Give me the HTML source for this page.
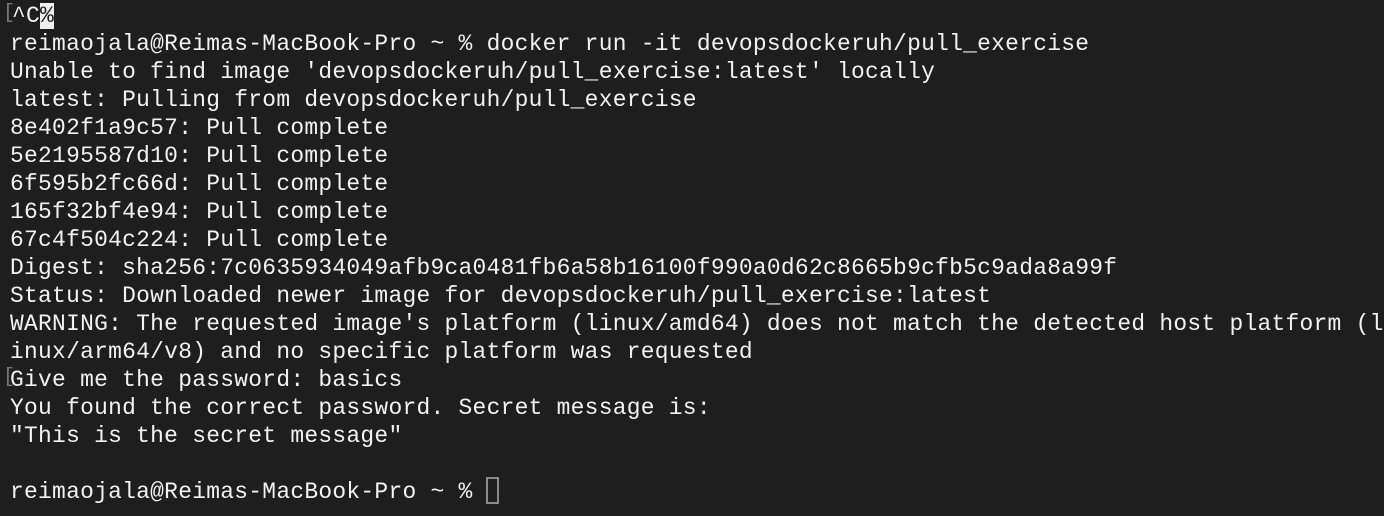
<!DOCTYPE html>
<html><head><meta charset="utf-8"><style>
html,body{margin:0;padding:0;background:#1e1e1e;width:1384px;height:516px;overflow:hidden}
pre{margin:0;position:absolute;left:10px;top:2px;font-family:"Liberation Mono",monospace;font-size:22.9px;letter-spacing:0.28px;line-height:28px;color:#f2f2f2;white-space:pre}
.inv{background:#f0f0f0;color:#1e1e1e}
.br{position:absolute;left:3px;color:#777;font-family:"Liberation Mono",monospace;font-size:20px;line-height:28px}
.cur{position:absolute;left:486px;top:477px;width:13px;height:27px;border:2px solid #8a8a8a;box-sizing:border-box}
</style></head><body>
<div class="br" style="top:0">[</div>
<div class="br" style="top:364px">[</div>
<pre><span style="margin-left:2px">^C</span><span class="inv">%</span>
reimaojala@Reimas-MacBook-Pro ~ % docker run -it devopsdockeruh/pull_exercise
Unable to find image 'devopsdockeruh/pull_exercise:latest' locally
latest: Pulling from devopsdockeruh/pull_exercise
8e402f1a9c57: Pull complete
5e2195587d10: Pull complete
6f595b2fc66d: Pull complete
165f32bf4e94: Pull complete
67c4f504c224: Pull complete
Digest: sha256:7c0635934049afb9ca0481fb6a58b16100f990a0d62c8665b9cfb5c9ada8a99f
Status: Downloaded newer image for devopsdockeruh/pull_exercise:latest
WARNING: The requested image's platform (linux/amd64) does not match the detected host platform (l
inux/arm64/v8) and no specific platform was requested
Give me the password: basics
You found the correct password. Secret message is:
"This is the secret message"

reimaojala@Reimas-MacBook-Pro ~ % </pre>
<div class="cur"></div>
</body></html>
